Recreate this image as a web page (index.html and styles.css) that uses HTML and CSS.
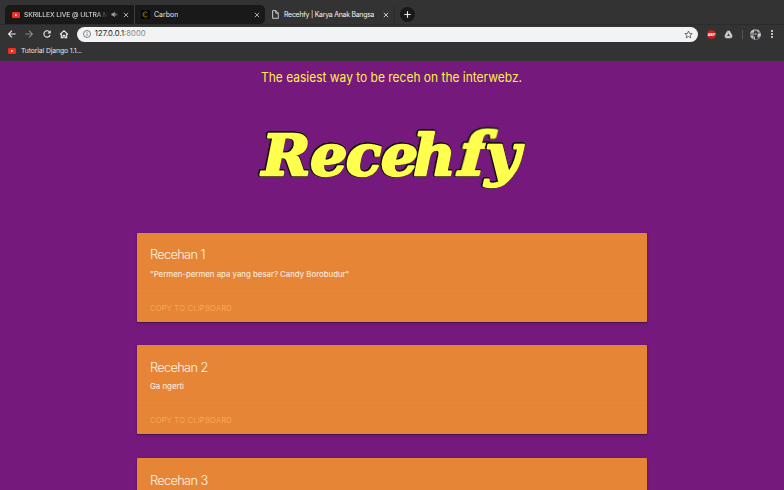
FILE: index.html
```html
<!DOCTYPE html>
<html lang="en">
<head>
<meta charset="utf-8">
<title>Recehfy | Karya Anak Bangsa</title>
<link rel="stylesheet" href="styles.css">
</head>
<body>
<header class="browser">
  <div class="tabs">
    <div class="tab tab-video">
      <svg class="yt" viewBox="0 0 8 6"><rect width="8" height="6" rx="1.2" fill="#f32b20"/><path d="M3.2 1.7v2.6L5.4 3z" fill="#fff"/></svg>
      <span class="tab-title fade">SKRILLEX LIVE @ ULTRA M</span>
      <svg class="sound" viewBox="0 0 7 7"><path d="M.5 2.5h1.3L3.7.8v5.4L1.8 4.5H.5z" fill="#aaa"/><path d="M4.7 2.2v2.6M5.9 2.8v1.4" stroke="#aaa" stroke-width=".7"/></svg>
      <svg class="close" viewBox="0 0 6 6"><path d="M.8.8l4.4 4.4M5.2.8L.8 5.2"/></svg>
    </div>
    <div class="tab tab-carbon">
      <svg class="carbon" viewBox="0 0 9 9"><rect width="9" height="9" fill="#050505"/><path d="M6.4 2.8L4.5 1.7 2.2 3v3l2.3 1.3 1.9-1.1" fill="none" stroke="#8b751d" stroke-width="1"/><path d="M4.6 3.3L3.5 4v1.2l1.1.6" fill="none" stroke="#6b5b19" stroke-width=".6"/></svg>
      <span class="tab-title">Carbon</span>
      <svg class="close" viewBox="0 0 6 6"><path d="M.8.8l4.4 4.4M5.2.8L.8 5.2"/></svg>
    </div>
    <div class="tab tab-active">
      <svg class="page-icon" viewBox="0 0 7 9"><path d="M.6.6h3.2l2.5 2.5v5.2H.6zM3.8.6v2.6h2.5" fill="none" stroke="#e4e4e4" stroke-width=".85"/></svg>
      <span class="tab-title">Recehfy | Karya Anak Bangsa</span>
      <svg class="close" viewBox="0 0 6 6"><path d="M.8.8l4.4 4.4M5.2.8L.8 5.2"/></svg>
    </div>
    <svg class="new-tab" viewBox="0 0 15 15"><circle cx="7.5" cy="7.5" r="7.5" fill="#191919"/><path d="M7.5 4.3v6.4M4.3 7.5h6.4" stroke="#eee" stroke-width="1.1"/></svg>
  </div>
  <div class="toolbar">
    <svg class="nav" viewBox="0 0 10 10"><path d="M8.6 5H1.7M4.9 1.7L1.6 5l3.3 3.3"/></svg>
    <svg class="nav dim" viewBox="0 0 10 10"><path d="M1.4 5h6.9M5.1 1.7L8.4 5 5.1 8.3"/></svg>
    <svg class="nav" viewBox="0 0 10 10"><path d="M7.9 3.4A3.2 3.2 0 1 0 8.1 6"/><path class="head" d="M8.6 1.3v3.1H5.5z"/></svg>
    <svg class="nav" viewBox="0 0 10 10"><path d="M1 5.3L5 1.8l4 3.5M2.3 4.5v4.1h1.8V6.2h1.8v2.4h1.8V4.5"/></svg>
    <div class="address">
      <svg class="info" viewBox="0 0 8 8"><circle cx="4" cy="4" r="3.5" fill="none" stroke="#63666a" stroke-width=".8"/><path d="M4 3.5v2.4M4 2v.8" stroke="#63666a" stroke-width=".8"/></svg>
      <span class="url">127.0.0.1<span class="port">:8000</span></span>
      <svg class="star" viewBox="0 0 9 9"><path d="M4.5 1l1 2.4 2.7.2-2.1 1.7.7 2.6-2.3-1.4-2.3 1.4.7-2.6L.8 3.6l2.7-.2z" fill="none" stroke="#505357" stroke-width=".8"/></svg>
    </div>
    <svg class="abp" viewBox="0 0 9 9"><path d="M2.7.2h3.6l2.5 2.5v3.6L6.3 8.8H2.7L.2 6.3V2.7z" fill="#cb2020"/><text x="4.5" y="5.8" text-anchor="middle">ABP</text></svg>
    <svg class="drive" viewBox="0 0 9 9"><path d="M3.2.8h2.6L8.6 6 7.3 8.2H1.7L.4 6z" fill="#cfcfcf"/><path d="M4.5 3.5L6 6H3z" fill="#3c3c3c"/><path d="M3.2.8l1.3 2.7M.6 6H3M6 6l1.3 2.2" stroke="#8b8b8b" stroke-width=".5"/></svg>
    <span class="divider"></span>
    <svg class="avatar" viewBox="0 0 11 11"><circle cx="5.5" cy="5.5" r="5.5" fill="#777e84"/><path d="M1.3 2.1L4.4.2l-.8 3.1-3.4.6zM6.4.2l3.4 2.1-2 .5zM.4 7l3 .2-1 2.2zM7.5 5l3.2-.6v2.5l-2.5 1z" fill="#c9cfd2"/><path d="M4 2.8l2.8-.9 1.2 2-1 3 .8 3.3H3.4l.8-3.5z" fill="#303238"/><circle cx="5.6" cy="4.9" r="1.2" fill="#a38070"/><path d="M3.6 8l1-.8.4 3.3h-.8z" fill="#ddd"/></svg>
    <svg class="menu" viewBox="0 0 4 10"><circle cx="2" cy="2" r="1"/><circle cx="2" cy="5" r="1"/><circle cx="2" cy="8" r="1"/></svg>
  </div>
  <div class="bookmarks">
    <svg class="yt" viewBox="0 0 8 6"><rect width="8" height="6" rx="1.2" fill="#f32b20"/><path d="M3.2 1.7v2.6L5.4 3z" fill="#fff"/></svg>
    <span>Tutorial Django 1.1...</span>
  </div>
</header>
<main class="page">
  <p class="tagline"><svg viewBox="0 0 270 20"><text x="4" y="15" textLength="261" lengthAdjust="spacingAndGlyphs">The easiest way to be receh on the interwebz.</text></svg></p>
  <h1 class="logo"><svg viewBox="0 0 280 80"><text transform="scale(1.04 1)" y="53" x="9.5 56 90.5 124 155">Receh</text><text class="upright" transform="translate(202.5 53) skewX(-15) scale(1.12 1.05)">f</text><text transform="translate(233 53) scale(1.08 1)">y</text></svg></h1>
  <section class="cards">
    <article class="card">
      <h2>Recehan 1</h2>
      <p>"Permen-permen apa yang besar? Candy Borobudur"</p>
      <div class="action"><a>Copy to clipboard</a></div>
    </article>
    <article class="card">
      <h2>Recehan 2</h2>
      <p>Ga ngerti</p>
      <div class="action"><a>Copy to clipboard</a></div>
    </article>
    <article class="card">
      <h2>Recehan 3</h2>
    </article>
  </section>
</main>
</body>
</html>
```

FILE: styles.css
```css
* { box-sizing: border-box; }
html, body { height: 100%; }
body {
  margin: 0;
  overflow: hidden;
  display: flex;
  flex-direction: column;
  background: #75197c;
  font-family: Inter, "Liberation Sans", sans-serif;
}
svg { display: block; flex: none; }

.browser { flex: none; height: 61px; background: #333; color: #e4e4e4; }
.tabs { display: flex; height: 24px; padding: 5px 0 0 5px; }
.tab { display: flex; align-items: center; height: 19px; font-size: 7px; background: #191919; }
.tab-title { white-space: nowrap; overflow: hidden; line-height: 12px; }
.tab .close { width: 6px; height: 6px; margin-left: auto; }
.close path { stroke: #bbb; stroke-width: .9; fill: none; }
.tab-video { width: 130px; padding: 0 5px 0 7px; border-radius: 5px 0 0 0; border-right: 1px solid #414141; }
.tab-carbon { width: 130px; padding: 0 5px 0 6px; border-radius: 0 5px 5px 0; }
.tab-active { width: 130px; padding: 0 5px 0 7px; background: #333; border-right: 1px solid #2b2b2b; border-radius: 0 5px 0 0; color: #f4f4f4; }
.tab-active .tab-title { font-size: 6.9px; letter-spacing: -.23px; }
.tab-active .close path { stroke: #ddd; }
.yt { width: 8px; height: 6px; }
.tab-video .tab-title { width: 84px; margin-left: 4px; font-size: 6.8px; letter-spacing: -.13px; }
.fade { -webkit-mask-image: linear-gradient(90deg, #000 86%, transparent); mask-image: linear-gradient(90deg, #000 86%, transparent); }
.sound { width: 7px; height: 7px; margin-left: 3px; }
.carbon { width: 9px; height: 9px; margin-right: 4px; }
.page-icon { width: 7px; height: 9px; margin-right: 5px; }
.new-tab { width: 15px; height: 15px; margin: 2px 0 0 5px; }

.toolbar { display: flex; align-items: center; height: 19px; padding: 0 10px 0 7px; border-top: 1px solid #2b2b2b; }
.nav { width: 10px; height: 10px; margin-right: 7.4px; }
.nav path { stroke: #eee; stroke-width: 1.1; fill: none; }
.nav .head { fill: #eee; stroke: none; }
.nav.dim path { stroke: #888; }
.address { display: flex; align-items: center; width: 621.5px; height: 15px; padding: 0 5px 0 6px; border-radius: 8px; background: #f1f3f4; }
.info { width: 8px; height: 8px; }
.url { margin-left: 4.3px; font-size: 7.7px; line-height: 12px; color: #222; }
.port { color: #85888b; }
.star { width: 9px; height: 9px; margin-left: auto; }
.abp { width: 9px; height: 9px; margin-left: 9px; }
.abp text { font-family: "Liberation Sans", sans-serif; font-size: 3.6px; font-weight: bold; fill: #fff; }
.drive { width: 9px; height: 9px; margin-left: 8px; }
.divider { width: 1px; height: 9px; margin-left: 9px; background: #555; }
.avatar { width: 11px; height: 11px; margin-left: 7px; }
.menu { width: 4px; height: 10px; margin-left: 9.5px; fill: #eee; }
.bookmarks { display: flex; align-items: center; gap: 5px; height: 15px; padding-left: 8px; font-size: 6.8px; letter-spacing: -.1px; }

.page { flex: 1; min-height: 0; overflow: hidden; border-top: 1px solid #6b2071; }
.tagline { margin: 5px 0 0; }
.tagline svg { width: 270px; height: 20px; margin: 0 auto; overflow: visible; }
.tagline text { font-size: 13px; fill: #fff149; }
.logo { margin: 35px 0 0; }
.logo svg { width: 280px; height: 80px; margin: 0 auto; overflow: visible; }
.logo text { font: italic bold 56px "DejaVu Serif", serif; fill: #ffff4e; stroke: #ffff4e; stroke-width: 2.4px; stroke-linejoin: round; filter: drop-shadow(.8px 0 0 #111) drop-shadow(-.8px 0 0 #111) drop-shadow(0 .8px 0 #111) drop-shadow(0 -.8px 0 #111); }
.logo .upright { font-style: normal; }

.cards { width: 510px; margin: 30.6px auto 0; }
.card { height: 89px; margin-bottom: 23.7px; padding: 13.8px 13px 0; border-radius: 1px; background: #e68536; color: #fff4e9; box-shadow: 0 1px 1px rgba(0,0,0,.3), 0 1px 3px rgba(0,0,0,.16); }
.card h2 { margin: 0; font-size: 12.8px; font-weight: 300; line-height: 18px; letter-spacing: -.68px; word-spacing: .4px; }
.card p { height: 19px; margin: 1.3px 0 0; font-size: 7.85px; line-height: 16px; }
.action { height: 28px; margin: 8px -13px 0; padding: 9px 13px 0; border-top: 1px solid rgba(160,130,100,.12); }
.action a { display: block; font-size: 7.6px; line-height: 12px; letter-spacing: .17px; text-transform: uppercase; color: #f8aa50; }
```
